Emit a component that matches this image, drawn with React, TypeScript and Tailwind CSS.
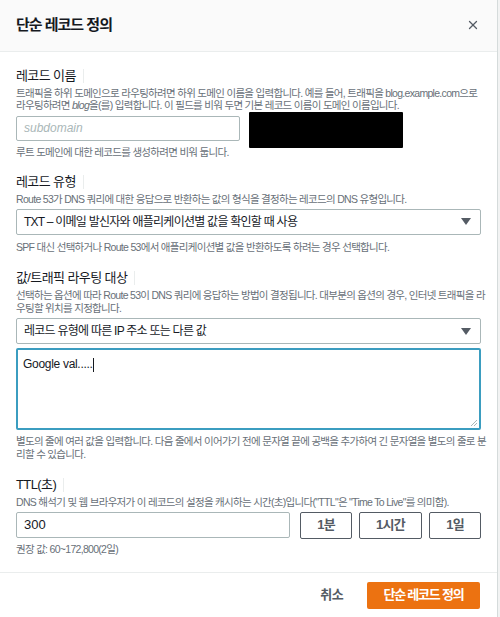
import { X } from "lucide-react";

const font = "font-['Liberation_Sans','Noto_Sans_CJK_KR',sans-serif] [font-feature-settings:'palt']";

function Label({ text }: { text: string }) {
  return (
    <div className="flex items-center h-[18px] text-[13px] tracking-[-0.6px] text-[#16191f]">
      <span>{text}</span>
      <span className="ml-[7px] w-px h-[14px] bg-[#eaeded]" />
    </div>
  );
}

function Hint({ children, className = "" }: { children: React.ReactNode; className?: string }) {
  return (
    <p className={`text-[10.5px] leading-[12.5px] tracking-[-0.7px] text-[#687078] whitespace-nowrap ${className}`}>
      {children}
    </p>
  );
}

function Select({ value }: { value: string }) {
  return (
    <div className="flex items-center justify-between h-[26px] border border-[#aab7b8] rounded-[2px] pl-[7px] pr-[9px] text-[12px] tracking-[-0.75px] text-[#16191f]">
      <span>{value}</span>
      <svg width="10" height="7" viewBox="0 0 10 7">
        <path d="M0 0h10L5 7z" fill="#545b64" />
      </svg>
    </div>
  );
}

export default function App() {
  const ttlOptions = ["1분", "1시간", "1일"];

  return (
    <div className={`flex w-[500px] h-[617px] bg-[#f2f3f3] ${font}`}>
      <div className="flex flex-col w-[498px] bg-white border-r border-[#d5dbdb]">
        <div className="flex items-center justify-between h-[53px] px-4 bg-[#fafafa] border-b border-[#eaeded]">
          <h1 className="text-[15px] tracking-[-1px] font-bold text-[#16191f]">단순 레코드 정의</h1>
          <X size={14} strokeWidth={2.2} className="mr-[1px] text-[#545b64]" />
        </div>

        <div className="flex flex-col px-4 pt-[15px] pb-[17px] w-[497px]">
          {/* record name */}
          <Label text="레코드 이름" />
          <Hint className="mt-[2px]">
            트래픽을 하위 도메인으로 라우팅하려면 하위 도메인 이름을 입력합니다. 예를 들어, 트래픽을 blog.example.com으로
            <br />
            라우팅하려면 <i>blog</i>을(를) 입력합니다. 이 필드를 비워 두면 기본 레코드 이름이 도메인 이름입니다.
          </Hint>
          <div className="flex items-center h-[25px] mt-[4px]">
            <div className="flex items-center w-[224px] h-[25px] border border-[#aab7b8] rounded-[2px] px-[7px] text-[12px] italic text-[#aab7b8]">
              subdomain
            </div>
            <div className="w-[154px] h-[36px] ml-[9px] mt-[3px] bg-black rounded-[1px]" />
          </div>
          <Hint className="mt-[5px]">루트 도메인에 대한 레코드를 생성하려면 비워 둡니다.</Hint>

          {/* record type */}
          <div className="mt-[15px]">
            <Label text="레코드 유형" />
          </div>
          <Hint className="mt-[2px]">Route 53가 DNS 쿼리에 대한 응답으로 반환하는 값의 형식을 결정하는 레코드의 DNS 유형입니다.</Hint>
          <div className="mt-[3px]">
            <Select value="TXT – 이메일 발신자와 애플리케이션별 값을 확인할 때 사용" />
          </div>
          <Hint className="mt-[6px]">SPF 대신 선택하거나 Route 53에서 애플리케이션별 값을 반환하도록 하려는 경우 선택합니다.</Hint>

          {/* value */}
          <div className="mt-[16px]">
            <Label text="값/트래픽 라우팅 대상" />
          </div>
          <Hint className="mt-[2px]">
            선택하는 옵션에 따라 Route 53이 DNS 쿼리에 응답하는 방법이 결정됩니다. 대부분의 옵션의 경우, 인터넷 트래픽을 라
            <br />
            우팅할 위치를 지정합니다.
          </Hint>
          <div className="mt-[4px]">
            <Select value="레코드 유형에 따른 IP 주소 또는 다른 값" />
          </div>
          <div className="relative mt-[4px] h-[82px] border-2 border-[#3b9dc0] rounded-[2px] px-[5px] pt-[5px] text-[12px] tracking-[-0.3px] text-[#16191f]">
            <span>Google val.....</span>
            <span className="inline-block w-px h-[14px] align-middle bg-[#16191f]" />
            <svg className="absolute right-[1px] bottom-[1px]" width="8" height="8" viewBox="0 0 8 8">
              <path d="M7 1L1 7M7 4L4 7" stroke="#aab7b8" strokeWidth="1" />
            </svg>
          </div>
          <Hint className="mt-[5px]">
            별도의 줄에 여러 값을 입력합니다. 다음 줄에서 이어가기 전에 문자열 끝에 공백을 추가하여 긴 문자열을 별도의 줄로 분
            <br />
            리할 수 있습니다.
          </Hint>

          {/* ttl */}
          <div className="mt-[16px]">
            <Label text="TTL(초)" />
          </div>
          <Hint className="mt-[2px]">DNS 해석기 및 웹 브라우저가 이 레코드의 설정을 캐시하는 시간(초)입니다("TTL"은 "Time To Live"를 의미함).</Hint>
          <div className="flex items-center gap-[7px] mt-[3px] h-[27px]">
            <div className="flex items-center w-[275px] h-[26px] border border-[#aab7b8] rounded-[2px] px-[7px] text-[13px] text-[#16191f]">
              300
            </div>
            <div className="flex gap-[7px] ml-[3px]">
              {ttlOptions.map((opt) => (
                <button
                  key={opt}
                  className={`h-[27px] border border-[#545b64] rounded-[2px] text-[13px] tracking-[-0.8px] font-bold text-[#545b64] ${opt === "1시간" ? "w-[63px]" : "w-[52px]"}`}
                >
                  {opt}
                </button>
              ))}
            </div>
          </div>
          <Hint className="mt-[4px]">권장 값: 60~172,800(2일)</Hint>
        </div>

        <div className="flex items-center justify-end gap-[24px] h-[46px] border-t border-[#eaeded] pr-[17px]">
          <button className="text-[13px] tracking-[-0.6px] font-bold text-[#545b64]">취소</button>
          <button className="w-[113px] h-[27px] bg-[#ec7211] rounded-[2px] text-[13px] tracking-[-1.2px] font-bold text-white">
            단순 레코드 정의
          </button>
        </div>
      </div>
    </div>
  );
}
